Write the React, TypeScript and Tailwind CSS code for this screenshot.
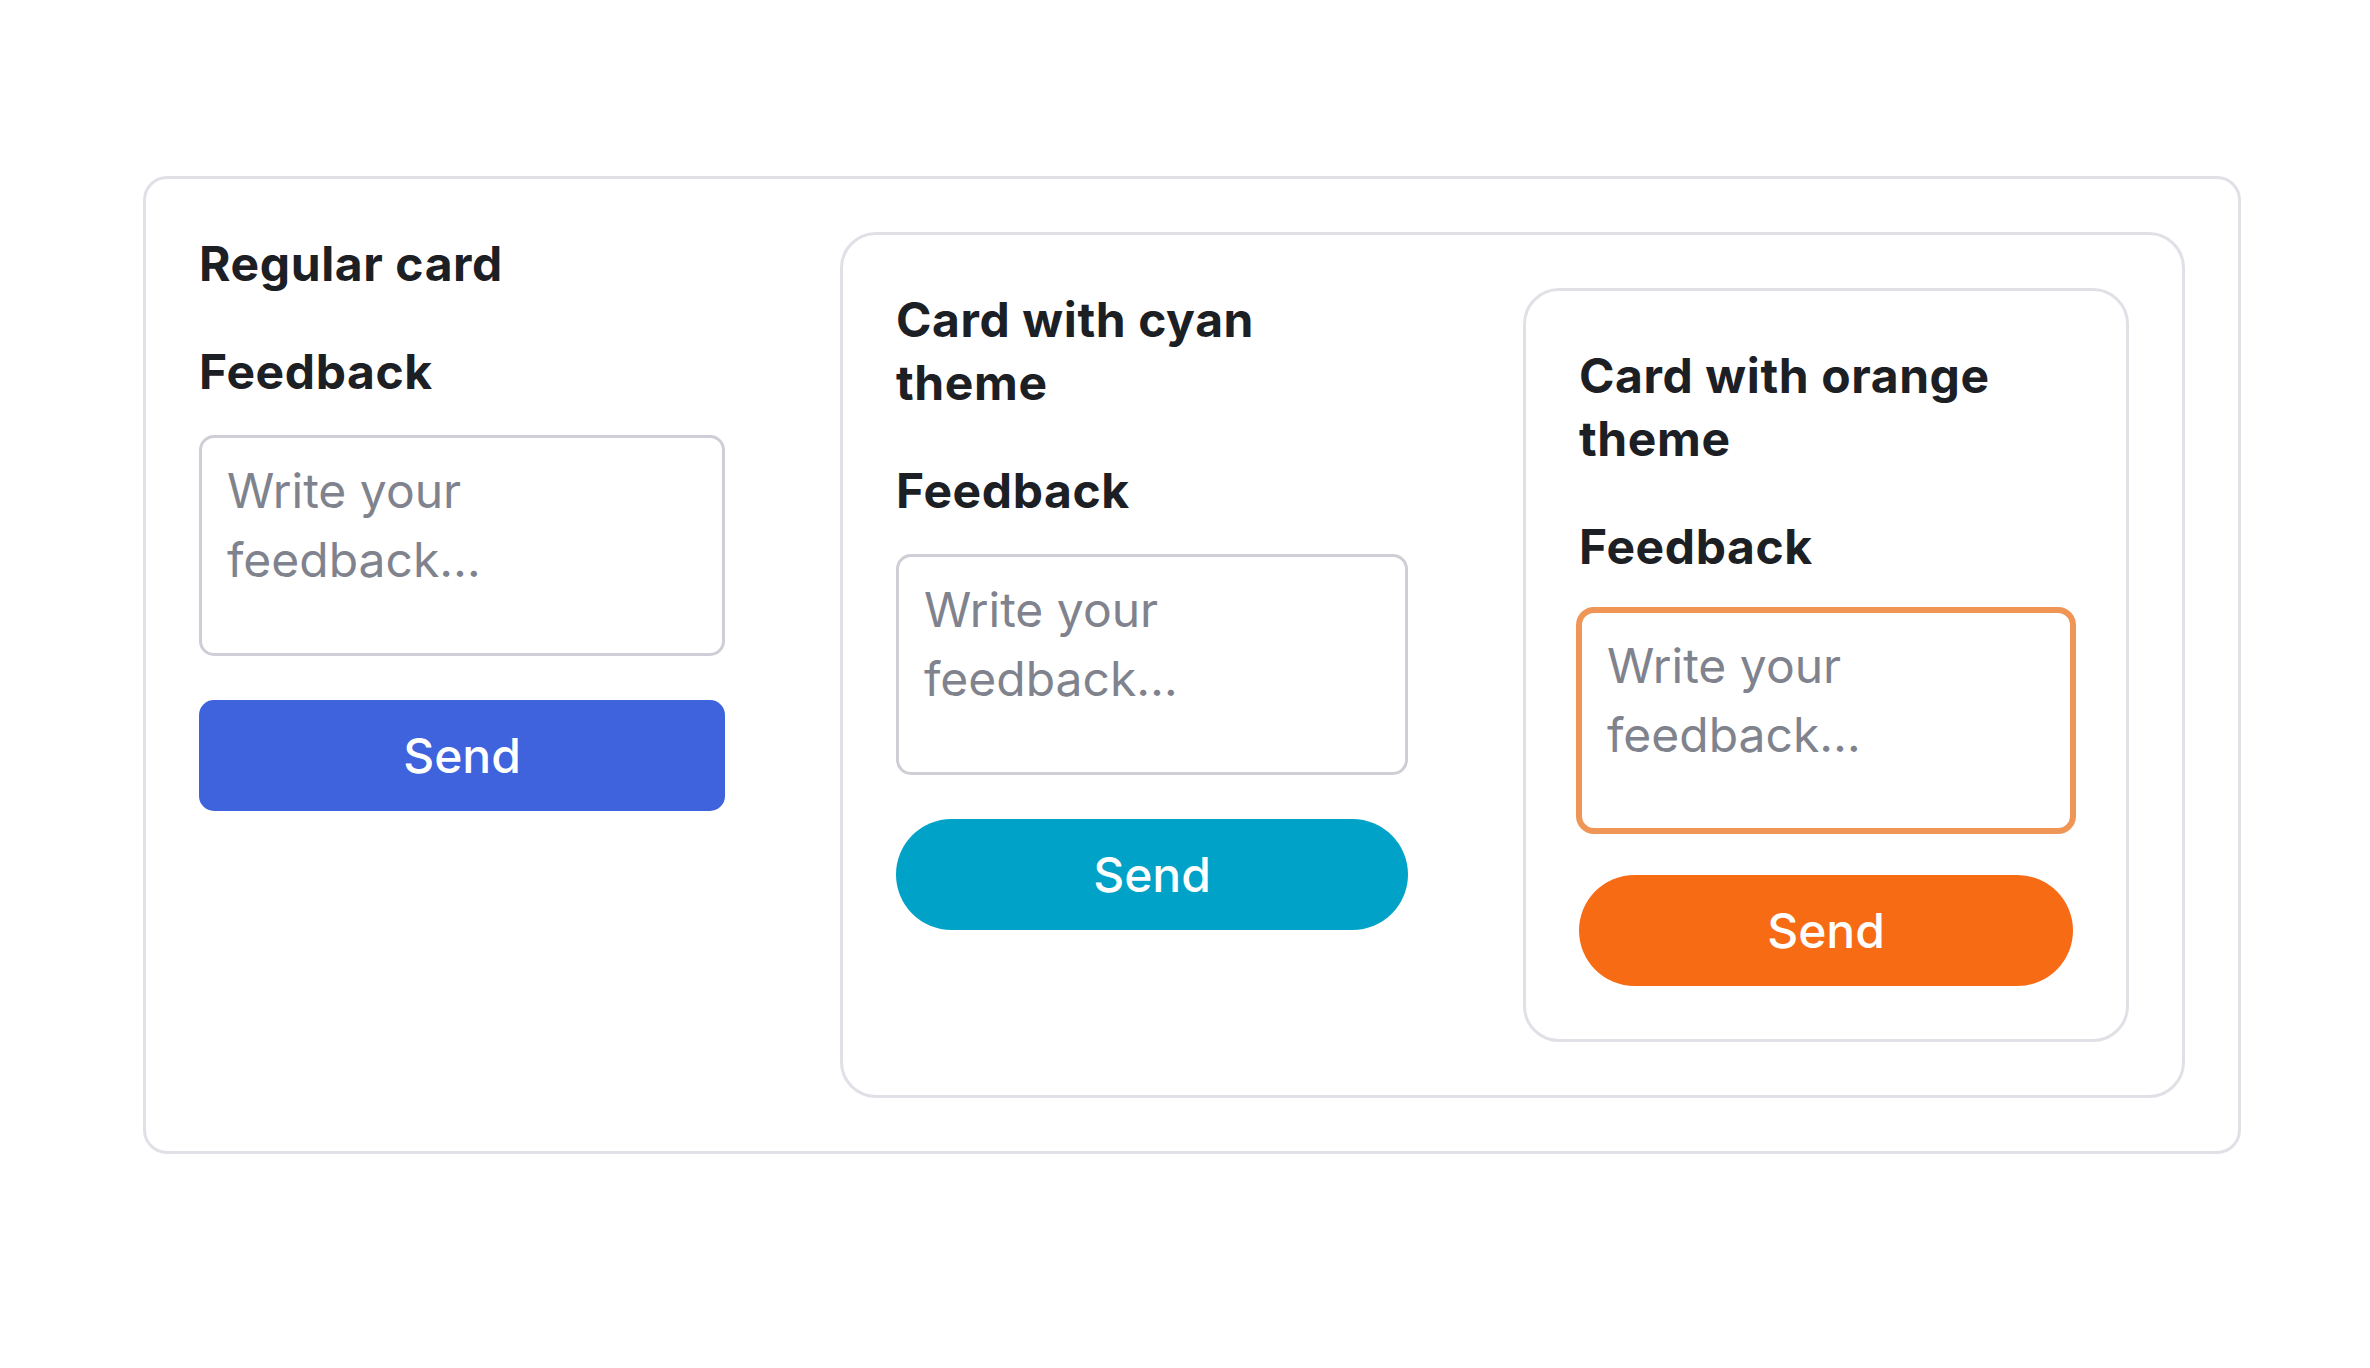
import React from "react";

type Theme = "regular" | "cyan" | "orange";

function FeedbackBlock({ title, theme }: { title: React.ReactNode; theme: Theme }) {
  const taClass =
    theme === "orange"
      ? "border-[3px] border-[#ef9556] shadow-[0_0_0_3px_#ef9556] rounded-[15px]"
      : "border-[3px] border-[#cdced6] rounded-[15px]";
  const btnClass =
    theme === "regular"
      ? "bg-[#3e63dd] rounded-[15px]"
      : theme === "cyan"
      ? "bg-[#00a2c7] rounded-full"
      : "bg-[#f76b15] rounded-full";
  return (
    <div className="flex flex-col">
      <h2 className="text-[48px] font-bold leading-[63px] text-[#1c2024] tracking-[0.6px]">{title}</h2>
      <label className="mt-[46px] text-[48px] font-bold leading-[62px] text-[#1c2024] tracking-[0.6px]">
        Feedback
      </label>
      <textarea
        placeholder="Write your feedback…"
        className={`mt-[32px] h-[221px] w-full resize-none bg-white pl-[25px] pr-[26px] pt-[18px] text-[48px] leading-[69px] text-[#1c2024] placeholder:text-[#80838d] outline-none ${taClass}`}
      />
      <button
        className={`mt-[44px] h-[111px] w-full text-[48px] font-medium text-white ${btnClass}`}
      >
        Send
      </button>
    </div>
  );
}

export default function App() {
  return (
    <div
      className="min-h-screen w-full bg-white"
      style={{ fontFamily: "Inter, 'Noto Sans', 'Liberation Sans', sans-serif" }}
    >
      <div className="pl-[143px] pt-[176px]">
        <div className="flex w-[2098px] gap-[115px] rounded-[24px] border-[3px] border-[#e0e1e6] p-[53px]">
          <div className="w-[526px] shrink-0">
            <FeedbackBlock title="Regular card" theme="regular" />
          </div>
          <div className="flex flex-1 gap-[115px] rounded-[36px] border-[3px] border-[#e0e1e6] p-[53px]">
            <div className="w-[512px] shrink-0">
              <FeedbackBlock
                title={
                  <>
                    Card with cyan
                    <br />
                    theme
                  </>
                }
                theme="cyan"
              />
            </div>
            <div className="flex-1 rounded-[36px] border-[3px] border-[#e0e1e6] p-[53px]">
              <FeedbackBlock
                title={
                  <>
                    Card with orange
                    <br />
                    theme
                  </>
                }
                theme="orange"
              />
            </div>
          </div>
        </div>
      </div>
    </div>
  );
}
